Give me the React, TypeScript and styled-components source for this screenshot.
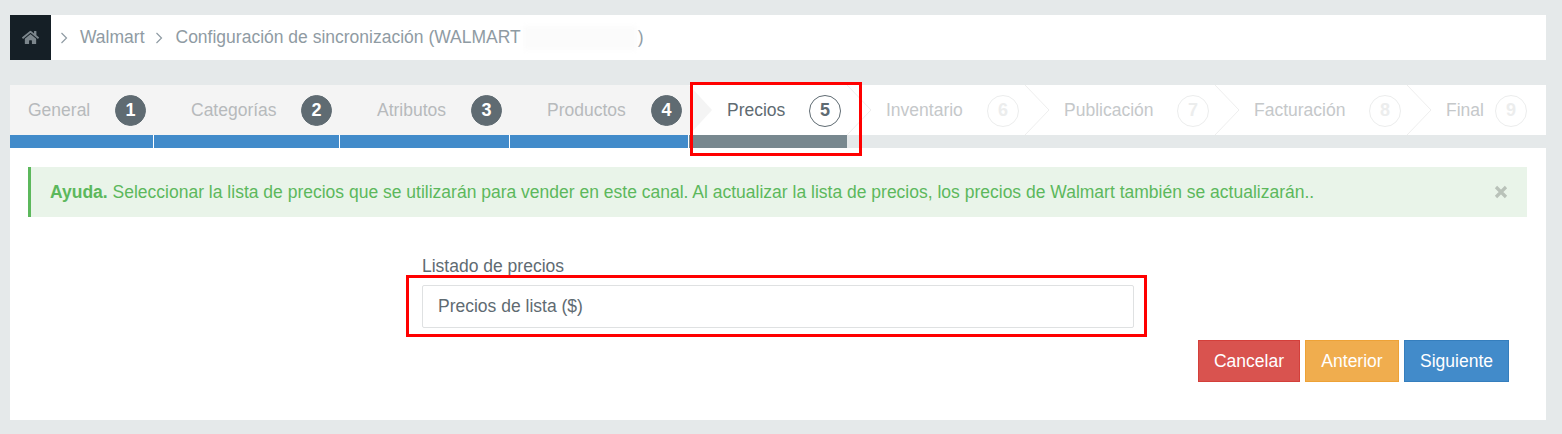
import React from 'react';
import styled, { createGlobalStyle } from 'styled-components';
import { FaHome } from 'react-icons/fa';

type StepState = 'done' | 'active' | 'todo';

const steps: { label: string; width: number; state: StepState }[] = [
    { label: 'General', width: 143, state: 'done' },
    { label: 'Categorías', width: 186, state: 'done' },
    { label: 'Atributos', width: 170, state: 'done' },
    { label: 'Productos', width: 180, state: 'done' },
    { label: 'Precios', width: 158, state: 'active' },
    { label: 'Inventario', width: 178, state: 'todo' },
    { label: 'Publicación', width: 190, state: 'todo' },
    { label: 'Facturación', width: 192, state: 'todo' },
    { label: 'Final', width: 139, state: 'todo' },
];

const GlobalStyle = createGlobalStyle`
    html, body {
        margin: 0;
        background: #e5e9ea;
    }
    body {
        font-family: "Liberation Sans", Arial, sans-serif;
        font-size: 17.5px;
    }
`;

const Page = styled.div`
    position: relative;
    box-sizing: border-box;
    width: 1562px;
    height: 434px;
    padding: 15px 16px 14px 10px;
    display: flex;
    flex-direction: column;
    overflow: hidden;
`;

const Breadcrumb = styled.nav`
    height: 45px;
    background: #fff;
    display: flex;
    align-items: center;
    color: #8f9ba3;
    margin-bottom: 25px;
`;

const HomeBox = styled.div`
    width: 41px;
    height: 45px;
    background: #151f26;
    color: #7c868c;
    display: flex;
    align-items: center;
    justify-content: center;
    margin-right: 9px;
`;

const Crumb = styled.span<{ $gap: number }>`
    margin: 0 10px 0 ${(p) => p.$gap}px;
    white-space: nowrap;
`;

const Blurred = styled.span`
    display: inline-block;
    width: 114px;
    height: 24px;
    margin: 0 1px 0 2px;
    vertical-align: middle;
    background: #fbfbfb;
    filter: blur(2px);
`;

const Wizard = styled.div`
    display: flex;
`;

const Step = styled.div<{ $width: number }>`
    width: ${(p) => p.$width}px;
    display: flex;
    flex-direction: column;
`;

const StepHead = styled.div<{ $state: StepState; $first: boolean; $last: boolean }>`
    position: relative;
    box-sizing: border-box;
    height: 50px;
    display: flex;
    align-items: center;
    justify-content: space-between;
    padding: 0 ${(p) => (p.$last ? 19 : p.$state === 'done' ? 7 : 6)}px 0
        ${(p) => (p.$first ? 18 : p.$state === 'todo' ? 39 : 38)}px;
    background: ${(p) => (p.$state === 'done' ? '#f4f4f4' : '#fff')};
    color: ${(p) => (p.$state === 'active' ? '#5f6b72' : p.$state === 'done' ? '#b7babc' : '#c5c8ca')};
`;

const Chevron = styled.svg`
    position: absolute;
    left: 0;
    top: 0;
    width: 24px;
    height: 50px;
`;

const Badge = styled.span<{ $state: StepState }>`
    box-sizing: border-box;
    width: ${(p) => (p.$state === 'done' ? 31 : 32)}px;
    height: ${(p) => (p.$state === 'done' ? 31 : 32)}px;
    margin-top: 1px;
    border-radius: 50%;
    display: flex;
    align-items: center;
    justify-content: center;
    font-weight: bold;
    font-size: 18px;
    background: ${(p) => (p.$state === 'done' ? '#5f6b72' : '#fff')};
    color: ${(p) => (p.$state === 'done' ? '#fff' : p.$state === 'active' ? '#5f6b72' : '#eceded')};
    border: 1px solid ${(p) => (p.$state === 'todo' ? '#eceded' : '#5f6b72')};
`;

const StepBar = styled.div<{ $state: StepState; $divideLeft: boolean; $divideRight: boolean }>`
    box-sizing: border-box;
    height: 13px;
    background: ${(p) => (p.$state === 'done' ? '#428bca' : p.$state === 'active' ? '#78888f' : 'transparent')};
    border-left: ${(p) => (p.$divideLeft ? '1px solid #fff' : 'none')};
    border-right: ${(p) => (p.$divideRight ? '1px solid #fff' : 'none')};
`;

const Panel = styled.main`
    flex: 1;
    background: #fff;
    padding: 19px 19px 0 18px;
`;

const Alert = styled.div`
    box-sizing: border-box;
    height: 50px;
    background: #e9f4e9;
    border-left: 3px solid #5cb85c;
    color: #5cb85c;
    display: flex;
    align-items: center;
    justify-content: space-between;
    padding: 0 19px 0 19px;
`;

const CloseIcon = styled.svg`
    width: 14px;
    height: 14px;
`;

const Form = styled.div`
    width: 712px;
    margin: 40px 0 0 394px;
`;

const Label = styled.label`
    display: block;
    color: #5f6b72;
    line-height: 18px;
    margin-bottom: 10px;
`;

const Field = styled.div`
    box-sizing: border-box;
    height: 43px;
    border: 1px solid #dfe1e2;
    border-radius: 2px;
    color: #5f6b72;
    display: flex;
    align-items: center;
    padding: 0 15px;
`;

const Actions = styled.div`
    display: flex;
    justify-content: flex-end;
    gap: 5px;
    margin-top: 12px;
    padding-right: 18px;
`;

const Button = styled.button<{ $color: string; $edge: string; $width: number }>`
    box-sizing: border-box;
    width: ${(p) => p.$width}px;
    height: 42px;
    padding: 0;
    border: 1px solid ${(p) => p.$edge};
    background: ${(p) => p.$color};
    color: #fff;
    font: inherit;
`;

const Highlight = styled.div<{ $x: number; $y: number; $w: number; $h: number }>`
    position: absolute;
    left: ${(p) => p.$x}px;
    top: ${(p) => p.$y}px;
    width: ${(p) => p.$w}px;
    height: ${(p) => p.$h}px;
    box-sizing: border-box;
    border: 3px solid #f00;
`;

const CrumbArrow = () => (
    <svg width="9" height="12" viewBox="0 0 9 12">
        <path d="M1.5 1l5 5-5 5" fill="none" stroke="#8f9ba3" strokeWidth="1.2" />
    </svg>
);

const App = () => {
    return (
        <Page>
            <GlobalStyle />
            <Breadcrumb>
                <HomeBox>
                    <FaHome size={17} />
                </HomeBox>
                <CrumbArrow />
                <Crumb $gap={11}>Walmart</Crumb>
                <CrumbArrow />
                <Crumb $gap={12}>
                    Configuración de sincronización (WALMART
                    <Blurred />)
                </Crumb>
            </Breadcrumb>
            <Wizard>
                {steps.map((step, i) => (
                    <Step key={step.label} $width={step.width}>
                        <StepHead $state={step.state} $first={i === 0} $last={i === steps.length - 1}>
                            {step.state === 'active' && (
                                <Chevron viewBox="0 0 24 50">
                                    <path d="M0 0 L23 25 L0 50 Z" fill="#f4f4f4" />
                                </Chevron>
                            )}
                            {step.state === 'todo' && (
                                <Chevron viewBox="0 0 24 50">
                                    <path d="M0 0 L24 25 L0 50" fill="#fff" stroke="#eeeeee" strokeWidth="1" />
                                </Chevron>
                            )}
                            <span>{step.label}</span>
                            <Badge $state={step.state}>{i + 1}</Badge>
                        </StepHead>
                        <StepBar
                            $state={step.state}
                            $divideLeft={step.state === 'done' && i > 0}
                            $divideRight={step.state === 'done' && steps[i + 1].state !== 'done'}
                        />
                    </Step>
                ))}
            </Wizard>
            <Panel>
                <Alert>
                    <span>
                        <strong>Ayuda.</strong> Seleccionar la lista de precios que se utilizarán para vender en este
                        canal. Al actualizar la lista de precios, los precios de Walmart también se actualizarán..
                    </span>
                    <CloseIcon viewBox="0 0 14 14">
                        <path d="M2 2l10 10M12 2L2 12" stroke="#b9c2b9" strokeWidth="3.2" />
                    </CloseIcon>
                </Alert>
                <Form>
                    <Label>Listado de precios</Label>
                    <Field>Precios de lista ($)</Field>
                </Form>
                <Actions>
                    <Button $color="#d9534f" $edge="#d43f3a" $width={102}>
                        Cancelar
                    </Button>
                    <Button $color="#f0ad4e" $edge="#eea236" $width={94}>
                        Anterior
                    </Button>
                    <Button $color="#428bca" $edge="#357ebd" $width={105}>
                        Siguiente
                    </Button>
                </Actions>
            </Panel>
            <Highlight $x={690} $y={82} $w={172} $h={74} />
            <Highlight $x={406} $y={275} $w={741} $h={62} />
        </Page>
    );
};

export default App;
